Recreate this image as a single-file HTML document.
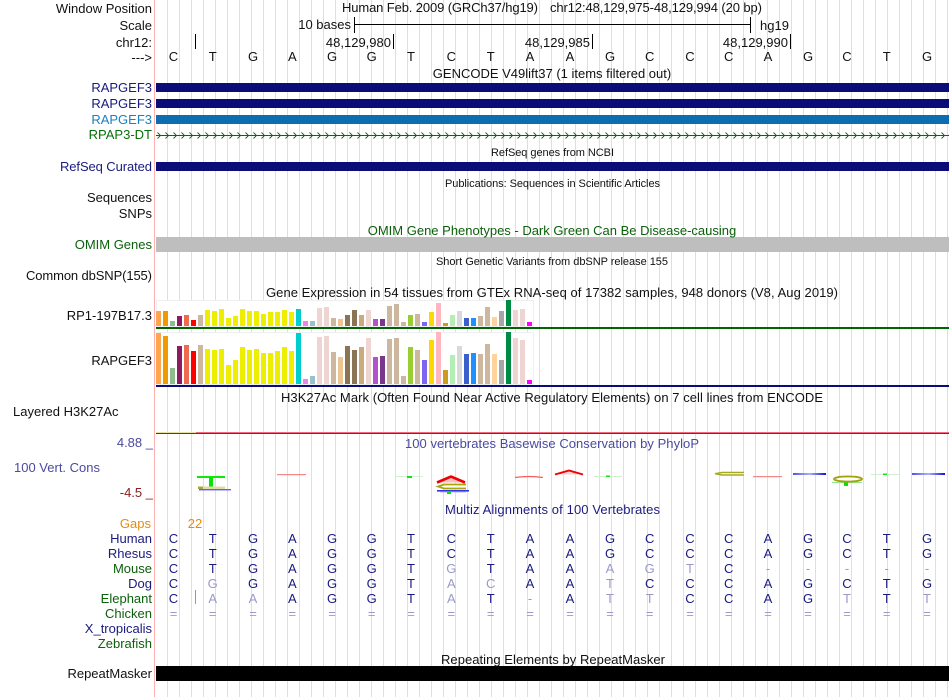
<!DOCTYPE html>
<html><head><meta charset="utf-8"><title>Genome Browser</title>
<style>
html,body{margin:0;padding:0;background:#fff;width:950px;height:697px;overflow:hidden}
svg{display:block;position:absolute;left:0;top:0}
text{font-family:"Liberation Sans",sans-serif;font-size:13px;fill:#111}
.e{text-anchor:end}
.m{text-anchor:middle}
.s{font-size:11px}
.n{fill:#1a1a80}
.g{fill:#0c600c}
.f{fill:#9a9ac8}
</style></head><body>
<svg width="950" height="697" viewBox="0 0 950 697" xmlns="http://www.w3.org/2000/svg">
<defs>
<pattern id="grid" patternUnits="userSpaceOnUse" x="167" y="0" width="12" height="697"><rect x="0" y="0" width="1" height="697" fill="#dcdcfa"/></pattern>
<pattern id="chev" patternUnits="userSpaceOnUse" x="157" y="131" width="8" height="9"><path d="M0.5 1.5L3.5 4.5L0.5 7.5" fill="none" stroke="#0a6a0a" stroke-width="0.9"/></pattern>
<linearGradient id="bl"><stop offset="0" stop-color="#5050f0"/><stop offset="0.5" stop-color="#b0b0f4"/><stop offset="1" stop-color="#1010e0"/></linearGradient>
<filter id="soft" x="-5%" y="-30%" width="110%" height="160%"><feGaussianBlur stdDeviation="0.35"/></filter>
</defs>
<rect width="950" height="697" fill="#fff"/>
<rect x="167" y="0" width="781" height="697" fill="url(#grid)"/>
<rect x="154" y="0" width="1" height="697" fill="#ffb0b0"/>

<!-- header labels -->
<text x="152" y="13" class="e">Window Position</text>
<text x="152" y="30" class="e">Scale</text>
<text x="152" y="47" class="e">chr12:</text>
<text x="152" y="62" class="e">---&gt;</text>
<text x="342" y="12" textLength="196" lengthAdjust="spacing">Human Feb. 2009 (GRCh37/hg19)</text>
<text x="550" y="12" textLength="212" lengthAdjust="spacing">chr12:48,129,975-48,129,994 (20 bp)</text>
<text x="351" y="29" class="e">10 bases</text>
<text x="760" y="30">hg19</text>
<g shape-rendering="crispEdges" fill="#000">
<rect x="354" y="17" width="1" height="16"/><rect x="354" y="24" width="397" height="1"/><rect x="750" y="17" width="1" height="16"/>
<rect x="195" y="34" width="1" height="15"/><rect x="393" y="34" width="1" height="15"/><rect x="592" y="34" width="1" height="15"/><rect x="790" y="34" width="1" height="15"/>
</g>
<text x="391" y="47" class="e">48,129,980</text>
<text x="590" y="47" class="e">48,129,985</text>
<text x="788" y="47" class="e">48,129,990</text>
<text y="61" class="m" x="173.5 212.7 253 292.3 332 371.7 411 451.3 490.7 530 570 610 649.7 690 728.7 768 808 847 886.7 927">CTGAGGTCTAAGCCCAGCTG</text>

<!-- gencode -->
<text x="552" y="78" class="m">GENCODE V49lift37 (1 items filtered out)</text>
<text x="152" y="92" class="e n">RAPGEF3</text>
<text x="152" y="108" class="e n">RAPGEF3</text>
<text x="152" y="124" class="e" style="fill:#1a80c0">RAPGEF3</text>
<text x="152" y="139" class="e" style="fill:#0a700a">RPAP3-DT</text>
<g shape-rendering="crispEdges">
<rect x="156" y="83" width="793" height="9" fill="#0c0c78"/>
<rect x="156" y="99" width="793" height="9" fill="#0c0c78"/>
<rect x="156" y="115" width="793" height="9" fill="#0c6eb0"/>
<rect x="156" y="135" width="793" height="1" fill="#0a6a0a"/>
<rect x="156" y="162" width="793" height="9" fill="#0c0c78"/>
<rect x="156" y="237" width="793" height="15" fill="#bebebe"/>
<rect x="156" y="666" width="793" height="15" fill="#000"/>
</g>
<rect x="157" y="131" width="792" height="9" fill="url(#chev)"/>
<text x="491" y="156" class="s" textLength="123" lengthAdjust="spacing">RefSeq genes from NCBI</text>
<text x="60" y="171" class="n" textLength="92" lengthAdjust="spacing">RefSeq Curated</text>
<text x="445" y="187" class="s" textLength="215" lengthAdjust="spacing">Publications: Sequences in Scientific Articles</text>
<text x="152" y="202" class="e">Sequences</text>
<text x="152" y="218" class="e">SNPs</text>
<text x="552" y="235" class="m g">OMIM Gene Phenotypes - Dark Green Can Be Disease-causing</text>
<text x="152" y="249" class="e g">OMIM Genes</text>
<text x="436" y="265" class="s" textLength="232" lengthAdjust="spacing">Short Genetic Variants from dbSNP release 155</text>
<text x="26" y="280" textLength="126" lengthAdjust="spacing">Common dbSNP(155)</text>
<text x="266" y="297" textLength="572" lengthAdjust="spacing">Gene Expression in 54 tissues from GTEx RNA-seq of 17382 samples, 948 donors (V8, Aug 2019)</text>
<text x="152" y="320" class="e">RP1-197B17.3</text>
<text x="152" y="365" class="e">RAPGEF3</text>

<!-- GTEx boxes -->
<g shape-rendering="crispEdges">
<rect x="156.5" y="300.5" width="377" height="26" fill="#fff" stroke="#efeff2"/>
<rect x="156.5" y="332.5" width="377" height="52" fill="#fff" stroke="#efeff2"/>
<!-- row 1 -->
<rect x="156" y="311" width="5" height="15" fill="#FFA54F"/><rect x="163" y="311" width="5" height="15" fill="#EE9A00"/><rect x="170" y="321" width="5" height="5" fill="#8FBC8F"/><rect x="177" y="316" width="5" height="10" fill="#8B1C62"/><rect x="184" y="315" width="5" height="11" fill="#EE6A50"/><rect x="191" y="320" width="5" height="6" fill="#FF0000"/><rect x="198" y="315" width="5" height="11" fill="#CDB79E"/>
<rect x="205" y="310" width="5" height="16" fill="#EEEE00"/><rect x="212" y="311" width="5" height="15" fill="#EEEE00"/><rect x="219" y="309" width="5" height="17" fill="#EEEE00"/><rect x="226" y="318" width="5" height="8" fill="#EEEE00"/><rect x="233" y="316" width="5" height="10" fill="#EEEE00"/><rect x="240" y="309" width="5" height="17" fill="#EEEE00"/><rect x="247" y="311" width="5" height="15" fill="#EEEE00"/><rect x="254" y="311" width="5" height="15" fill="#EEEE00"/><rect x="261" y="314" width="5" height="12" fill="#EEEE00"/><rect x="268" y="312" width="5" height="14" fill="#EEEE00"/><rect x="275" y="312" width="5" height="14" fill="#EEEE00"/><rect x="282" y="310" width="5" height="16" fill="#EEEE00"/><rect x="289" y="312" width="5" height="14" fill="#EEEE00"/>
<rect x="296" y="309" width="5" height="17" fill="#00CDCD"/><rect x="303" y="321" width="5" height="5" fill="#EE82EE"/><rect x="310" y="321" width="5" height="5" fill="#9AC0CD"/><rect x="317" y="308" width="5" height="18" fill="#EED5D2"/><rect x="324" y="307" width="5" height="19" fill="#EED5D2"/><rect x="331" y="318" width="5" height="8" fill="#CDB79E"/><rect x="338" y="319" width="5" height="7" fill="#EEC591"/><rect x="345" y="315" width="5" height="11" fill="#8B7355"/><rect x="352" y="310" width="5" height="16" fill="#8B7355"/><rect x="359" y="315" width="5" height="11" fill="#CDAA7D"/><rect x="366" y="310" width="5" height="16" fill="#EED5D2"/><rect x="373" y="319" width="5" height="7" fill="#B452CD"/><rect x="380" y="319" width="5" height="7" fill="#7A378B"/><rect x="387" y="306" width="5" height="20" fill="#CDB79E"/><rect x="394" y="304" width="5" height="22" fill="#CDB79E"/><rect x="401" y="322" width="5" height="4" fill="#CDB79E"/><rect x="408" y="315" width="5" height="11" fill="#9ACD32"/><rect x="415" y="314" width="5" height="12" fill="#CDB79E"/><rect x="422" y="322" width="5" height="4" fill="#7A67EE"/><rect x="429" y="312" width="5" height="14" fill="#FFD700"/><rect x="436" y="303" width="5" height="23" fill="#FFB6C1"/><rect x="443" y="323" width="5" height="3" fill="#CD9B1D"/><rect x="450" y="315" width="5" height="11" fill="#B4EEB4"/><rect x="457" y="311" width="5" height="15" fill="#D9D9D9"/><rect x="464" y="318" width="5" height="8" fill="#3A5FCD"/><rect x="471" y="318" width="5" height="8" fill="#1E90FF"/><rect x="478" y="316" width="5" height="10" fill="#CDB79E"/><rect x="485" y="307" width="5" height="19" fill="#CDB79E"/><rect x="492" y="317" width="5" height="9" fill="#FFD39B"/><rect x="499" y="311" width="5" height="15" fill="#A6A6A6"/><rect x="506" y="300" width="5" height="26" fill="#008B45"/><rect x="513" y="310" width="5" height="16" fill="#EED5D2"/><rect x="520" y="309" width="5" height="17" fill="#EED5D2"/><rect x="527" y="322" width="5" height="4" fill="#FF00FF"/>
<!-- row 2 -->
<rect x="156" y="333" width="5" height="51" fill="#FFA54F"/><rect x="163" y="336" width="5" height="48" fill="#EE9A00"/><rect x="170" y="368" width="5" height="16" fill="#8FBC8F"/><rect x="177" y="346" width="5" height="38" fill="#8B1C62"/><rect x="184" y="345" width="5" height="39" fill="#EE6A50"/><rect x="191" y="351" width="5" height="33" fill="#FF0000"/><rect x="198" y="345" width="5" height="39" fill="#CDB79E"/>
<rect x="205" y="349" width="5" height="35" fill="#EEEE00"/><rect x="212" y="350" width="5" height="34" fill="#EEEE00"/><rect x="219" y="349" width="5" height="35" fill="#EEEE00"/><rect x="226" y="365" width="5" height="19" fill="#EEEE00"/><rect x="233" y="360" width="5" height="24" fill="#EEEE00"/><rect x="240" y="347" width="5" height="37" fill="#EEEE00"/><rect x="247" y="350" width="5" height="34" fill="#EEEE00"/><rect x="254" y="349" width="5" height="35" fill="#EEEE00"/><rect x="261" y="353" width="5" height="31" fill="#EEEE00"/><rect x="268" y="353" width="5" height="31" fill="#EEEE00"/><rect x="275" y="351" width="5" height="33" fill="#EEEE00"/><rect x="282" y="347" width="5" height="37" fill="#EEEE00"/><rect x="289" y="351" width="5" height="33" fill="#EEEE00"/>
<rect x="296" y="333" width="5" height="51" fill="#00CDCD"/><rect x="303" y="379" width="5" height="5" fill="#EE82EE"/><rect x="310" y="376" width="5" height="8" fill="#9AC0CD"/><rect x="317" y="337" width="5" height="47" fill="#EED5D2"/><rect x="324" y="336" width="5" height="48" fill="#EED5D2"/><rect x="331" y="352" width="5" height="32" fill="#CDB79E"/><rect x="338" y="357" width="5" height="27" fill="#EEC591"/><rect x="345" y="346" width="5" height="38" fill="#8B7355"/><rect x="352" y="350" width="5" height="34" fill="#8B7355"/><rect x="359" y="347" width="5" height="37" fill="#CDAA7D"/><rect x="366" y="338" width="5" height="46" fill="#EED5D2"/><rect x="373" y="357" width="5" height="27" fill="#B452CD"/><rect x="380" y="356" width="5" height="28" fill="#7A378B"/><rect x="387" y="339" width="5" height="45" fill="#CDB79E"/><rect x="394" y="338" width="5" height="46" fill="#CDB79E"/><rect x="401" y="376" width="5" height="8" fill="#CDB79E"/><rect x="408" y="347" width="5" height="37" fill="#9ACD32"/><rect x="415" y="350" width="5" height="34" fill="#CDB79E"/><rect x="422" y="360" width="5" height="24" fill="#7A67EE"/><rect x="429" y="340" width="5" height="44" fill="#FFD700"/><rect x="436" y="332" width="5" height="52" fill="#FFB6C1"/><rect x="443" y="370" width="5" height="14" fill="#CD9B1D"/><rect x="450" y="355" width="5" height="29" fill="#B4EEB4"/><rect x="457" y="346" width="5" height="38" fill="#D9D9D9"/><rect x="464" y="354" width="5" height="30" fill="#3A5FCD"/><rect x="471" y="353" width="5" height="31" fill="#1E90FF"/><rect x="478" y="354" width="5" height="30" fill="#CDB79E"/><rect x="485" y="344" width="5" height="40" fill="#CDB79E"/><rect x="492" y="354" width="5" height="30" fill="#FFD39B"/><rect x="499" y="360" width="5" height="24" fill="#A6A6A6"/><rect x="506" y="332" width="5" height="52" fill="#008B45"/><rect x="513" y="338" width="5" height="46" fill="#EED5D2"/><rect x="520" y="340" width="5" height="44" fill="#EED5D2"/><rect x="527" y="380" width="5" height="4" fill="#FF00FF"/>
<rect x="156" y="327" width="793" height="2" fill="#006400"/>
<rect x="156" y="385" width="793" height="2" fill="#0c0c78"/>
<rect x="156" y="432" width="793" height="1" fill="#f06a7a"/>
<rect x="156" y="432" width="40" height="1" fill="#e8e0a0"/>
<rect x="156" y="433" width="793" height="1" fill="#b01030"/>
</g>

<text x="281" y="402" textLength="542" lengthAdjust="spacing">H3K27Ac Mark (Often Found Near Active Regulatory Elements) on 7 cell lines from ENCODE</text>
<text x="13" y="416">Layered H3K27Ac</text>

<!-- conservation -->
<text x="153" y="447" class="e" style="fill:#4a4a9f">4.88 _</text>
<text x="14" y="472" style="fill:#4a4a9f" textLength="86" lengthAdjust="spacing">100 Vert. Cons</text>
<text x="153" y="497" class="e" style="fill:#8b2020">-4.5 _</text>
<text x="405" y="448" style="fill:#4a4a9f" textLength="294" lengthAdjust="spacing">100 vertebrates Basewise Conservation by PhyloP</text>

<!-- logo glyphs -->
<g filter="url(#soft)">
<rect x="197" y="476" width="28" height="2" fill="#10e810"/><rect x="209" y="477" width="4" height="10" fill="#00e800"/>
<rect x="199" y="486.5" width="26" height="2.5" fill="#dcdca8"/><rect x="198" y="486.5" width="5" height="2.5" fill="#a8a840"/>
<rect x="199" y="489" width="32" height="1.4" fill="#6060f0"/>
<rect x="277" y="474" width="29" height="1.2" fill="#f08888"/>
<rect x="395" y="476" width="28" height="1" fill="#d0f0d0"/><rect x="407" y="476" width="5" height="2" fill="#10e810"/>
<rect x="594" y="476" width="28" height="1" fill="#d0f0d0"/><rect x="606" y="475.5" width="4" height="1.5" fill="#10e810"/>
<rect x="871" y="474" width="28" height="1" fill="#d0f0d0"/><rect x="883" y="473.5" width="4" height="1.5" fill="#10e810"/>
<rect x="753" y="476" width="29" height="1.2" fill="#f08888"/>
<rect x="793" y="473" width="33" height="2" fill="url(#bl)"/>
<rect x="912" y="473" width="33" height="2" fill="url(#bl)"/>
<rect x="832" y="482" width="30" height="1" fill="#90e890"/><rect x="844" y="482" width="4" height="4" fill="#00e800"/>
<rect x="437" y="490" width="32" height="1.6" fill="#3030f0"/><rect x="440" y="491.5" width="26" height="1" fill="#b8b8f0"/>
<rect x="447" y="492" width="4" height="2" fill="#00e800"/>
<path d="M437 482.5L451 476.5L465 482.5Z" fill="#f8c0c0"/>
<path d="M437 482.5L451 476.5L465 482.5" fill="none" stroke="#f00000" stroke-width="2.6"/>
<path d="M466 484.5H444L438 486.5L444 488.5H466" fill="#fffff0" stroke="#a8a810" stroke-width="1.8"/>
<path d="M515 477.5Q529 475.5 543 477.5" fill="none" stroke="#f06060" stroke-width="1.2"/>
<path d="M555 474.5L569 470.5L583 474.5Z" fill="#f8d0d0"/>
<path d="M555 474.5L569 470.5L583 474.5" fill="none" stroke="#f00000" stroke-width="1.9"/>
<path d="M744 472.5H722L715 473.7L722 475H744" fill="#fffff0" stroke="#a8a820" stroke-width="1.4"/>
<ellipse cx="848" cy="479" rx="14" ry="2.6" fill="#fff" stroke="#a8a010" stroke-width="1.9"/>
</g>

<!-- alignments -->
<text x="445" y="514" class="n" textLength="215" lengthAdjust="spacing">Multiz Alignments of 100 Vertebrates</text>
<text x="151" y="528" class="e" style="fill:#e88a10">Gaps</text>
<text x="195" y="528" class="m" style="fill:#e88a10">22</text>
<rect x="195" y="590" width="1" height="14" fill="#e08a20" shape-rendering="crispEdges"/>
<text x="152" y="543" class="e n">Human</text>
<text x="152" y="558" class="e n">Rhesus</text>
<text x="152" y="573" class="e g">Mouse</text>
<text x="152" y="588" class="e n">Dog</text>
<text x="152" y="603" class="e g">Elephant</text>
<text x="152" y="618" class="e g">Chicken</text>
<text x="152" y="633" class="e n">X_tropicalis</text>
<text x="152" y="648" class="e g">Zebrafish</text>
<text y="543" class="m n" x="173.5 212.7 253 292.3 332 371.7 411 451.3 490.7 530 570 610 649.7 690 728.7 768 808 847 886.7 927">CTGAGGTCTAAGCCCAGCTG</text>
<text y="558" class="m n" x="173.5 212.7 253 292.3 332 371.7 411 451.3 490.7 530 570 610 649.7 690 728.7 768 808 847 886.7 927">CTGAGGTCTAAGCCCAGCTG</text>
<text y="573" class="m n" x="173.5 212.7 253 292.3 332 371.7 411 451.3 490.7 530 570 610 649.7 690 728.7 768 808 847 886.7 927">CTGAGGT<tspan class="f">G</tspan>TAA<tspan class="f">AGT</tspan>C<tspan class="f">-----</tspan></text>
<text y="588" class="m n" x="173.5 212.7 253 292.3 332 371.7 411 451.3 490.7 530 570 610 649.7 690 728.7 768 808 847 886.7 927">C<tspan class="f">G</tspan>GAGGT<tspan class="f">AC</tspan>AA<tspan class="f">T</tspan>CCCAGCTG</text>
<text y="603" class="m n" x="173.5 212.7 253 292.3 332 371.7 411 451.3 490.7 530 570 610 649.7 690 728.7 768 808 847 886.7 927">C<tspan class="f">AA</tspan>AGGT<tspan class="f">A</tspan>T<tspan class="f">-</tspan>A<tspan class="f">TT</tspan>CCAG<tspan class="f">T</tspan>T<tspan class="f">T</tspan></text>
<text y="618" class="m f" x="173.5 212.7 253 292.3 332 371.7 411 451.3 490.7 530 570 610 649.7 690 728.7 768 808 847 886.7 927">====================</text>

<text x="441" y="664" textLength="224" lengthAdjust="spacing">Repeating Elements by RepeatMasker</text>
<text x="152" y="678" class="e">RepeatMasker</text>
</svg>
</body></html>
